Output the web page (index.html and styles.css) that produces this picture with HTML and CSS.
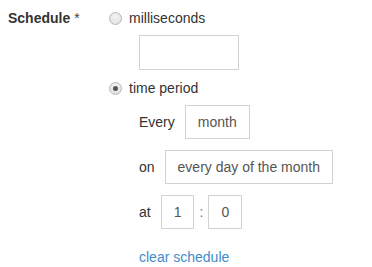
FILE: index.html
```html
<!DOCTYPE html>
<html>
<head>
<meta charset="utf-8">
<link rel="stylesheet" href="styles.css">
</head>
<body>
<div class="form">
  <div class="label"><b>Schedule</b> <span class="req">*</span></div>
  <div class="options">
    <div class="radio-line"><span class="radio"></span><span>milliseconds</span></div>
    <div class="ms-input"></div>
    <div class="radio-line second"><span class="radio checked"></span><span>time period</span></div>
    <div class="period">
      <div class="row"><span>Every</span><span class="box">month</span></div>
      <div class="row"><span>on</span><span class="box">every day of the month</span></div>
      <div class="row"><span>at</span><span class="time"><span class="box">1</span><span class="colon">:</span><span class="box">0</span></span></div>
      <a class="clear" href="#">clear schedule</a>
    </div>
  </div>
</div>
</body>
</html>
```
FILE: styles.css
```css
html, body {
  margin: 0;
  padding: 0;
  background: #fff;
  overflow: hidden;
}
body {
  font-family: "Liberation Sans", Arial, sans-serif;
  font-size: 14px;
  color: #333;
}
.form {
  display: flex;
  align-items: flex-start;
  padding: 8px 0 0 8px;
}
.label {
  width: 101px;
  line-height: 20px;
  white-space: nowrap;
}
.req {
  font-weight: normal;
  color: #444;
}
.options {
  display: flex;
  flex-direction: column;
}
.radio-line {
  display: flex;
  align-items: center;
  gap: 7px;
  height: 20px;
}
.radio-line.second {
  margin-top: 8px;
}
.radio {
  width: 13px;
  height: 13px;
  box-sizing: border-box;
  border-radius: 50%;
  border: 1px solid #b9b9b9;
  background: radial-gradient(circle at 50% 35%, #f4f4f4 0%, #dcdcdc 100%);
  position: relative;
}
.radio.checked::after {
  content: "";
  position: absolute;
  left: 3px;
  top: 3px;
  width: 5px;
  height: 5px;
  border-radius: 50%;
  background: #555;
}
.ms-input {
  margin: 7px 0 0 30px;
  width: 100px;
  height: 35px;
  box-sizing: border-box;
  border: 1px solid #d2d2d2;
}
.period {
  margin: 7px 0 0 30px;
  display: flex;
  flex-direction: column;
  gap: 11px;
  align-items: flex-start;
}
.row {
  display: flex;
  align-items: center;
  gap: 10px;
}
.time {
  display: flex;
  align-items: center;
  gap: 5px;
}
.colon {
  color: #777;
}
.box {
  display: inline-flex;
  align-items: center;
  height: 34px;
  box-sizing: border-box;
  padding: 0 12px;
  border: 1px solid #d2d2d2;
  color: #555;
}
.clear {
  margin-top: 7px;
  line-height: 20px;
  color: #428bca;
  text-decoration: none;
}
```
